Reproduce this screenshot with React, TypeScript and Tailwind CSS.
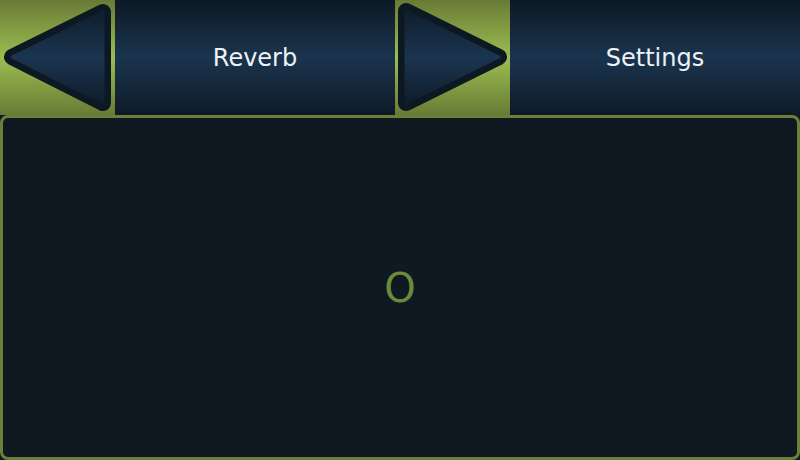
import React from "react";

const greenBg = "bg-[linear-gradient(to_bottom,#687b35_0%,#9cbd51_50%,#687b35_100%)]";
const blueBg = "bg-[linear-gradient(to_bottom,#0d1925_0%,#1a344e_50%,#0e1a26_100%)]";

function Tri({ dir }: { dir: "left" | "right" }) {
  const pts = dir === "left" ? "12,57 103,12 103,103" : "11,11 11,103 104,57";
  const id = dir === "left" ? "gl" : "gr";
  return (
    <svg width="115" height="115" viewBox="0 0 115 115" className="block">
      <defs>
        <linearGradient id={id} x1="0" y1="0" x2="0" y2="1">
          <stop offset="0" stopColor="#0f1e2d" />
          <stop offset="0.5" stopColor="#1b3550" />
          <stop offset="1" stopColor="#0f1d2b" />
        </linearGradient>
      </defs>
      <polygon
        points={pts}
        fill="#0c1822"
        stroke="#0c1822"
        strokeWidth="16"
        strokeLinejoin="round"
      />
      <polygon
        points={pts}
        fill={`url(#${id})`}
        stroke={`url(#${id})`}
        strokeWidth="3"
        strokeLinejoin="round"
      />
    </svg>
  );
}

export default function App() {
  return (
    <div
      className="w-[800px] h-[460px] flex flex-col bg-[#0e1922] overflow-hidden"
      style={{ fontFamily: '"DejaVu Sans", sans-serif' }}
    >
      <div className="flex h-[115px] shrink-0">
        <div className={`w-[115px] h-full ${greenBg}`}>
          <Tri dir="left" />
        </div>
        <div className={`w-[280px] h-full ${blueBg} flex items-center justify-center text-[24px] text-[#eef2f6]`}>
          Reverb
        </div>
        <div className={`w-[115px] h-full ${greenBg}`}>
          <Tri dir="right" />
        </div>
        <div className={`flex-1 h-full ${blueBg} flex items-center justify-center text-[24px] text-[#eef2f6]`}>
          Settings
        </div>
      </div>
      <div className="flex-1 border-[3px] border-[#6b7f3a] rounded-[8px] bg-[#0e1922] flex items-center justify-center">
        <span className="text-[40px] leading-none text-[#6b8a3a] mt-[1px]">O</span>
      </div>
    </div>
  );
}
